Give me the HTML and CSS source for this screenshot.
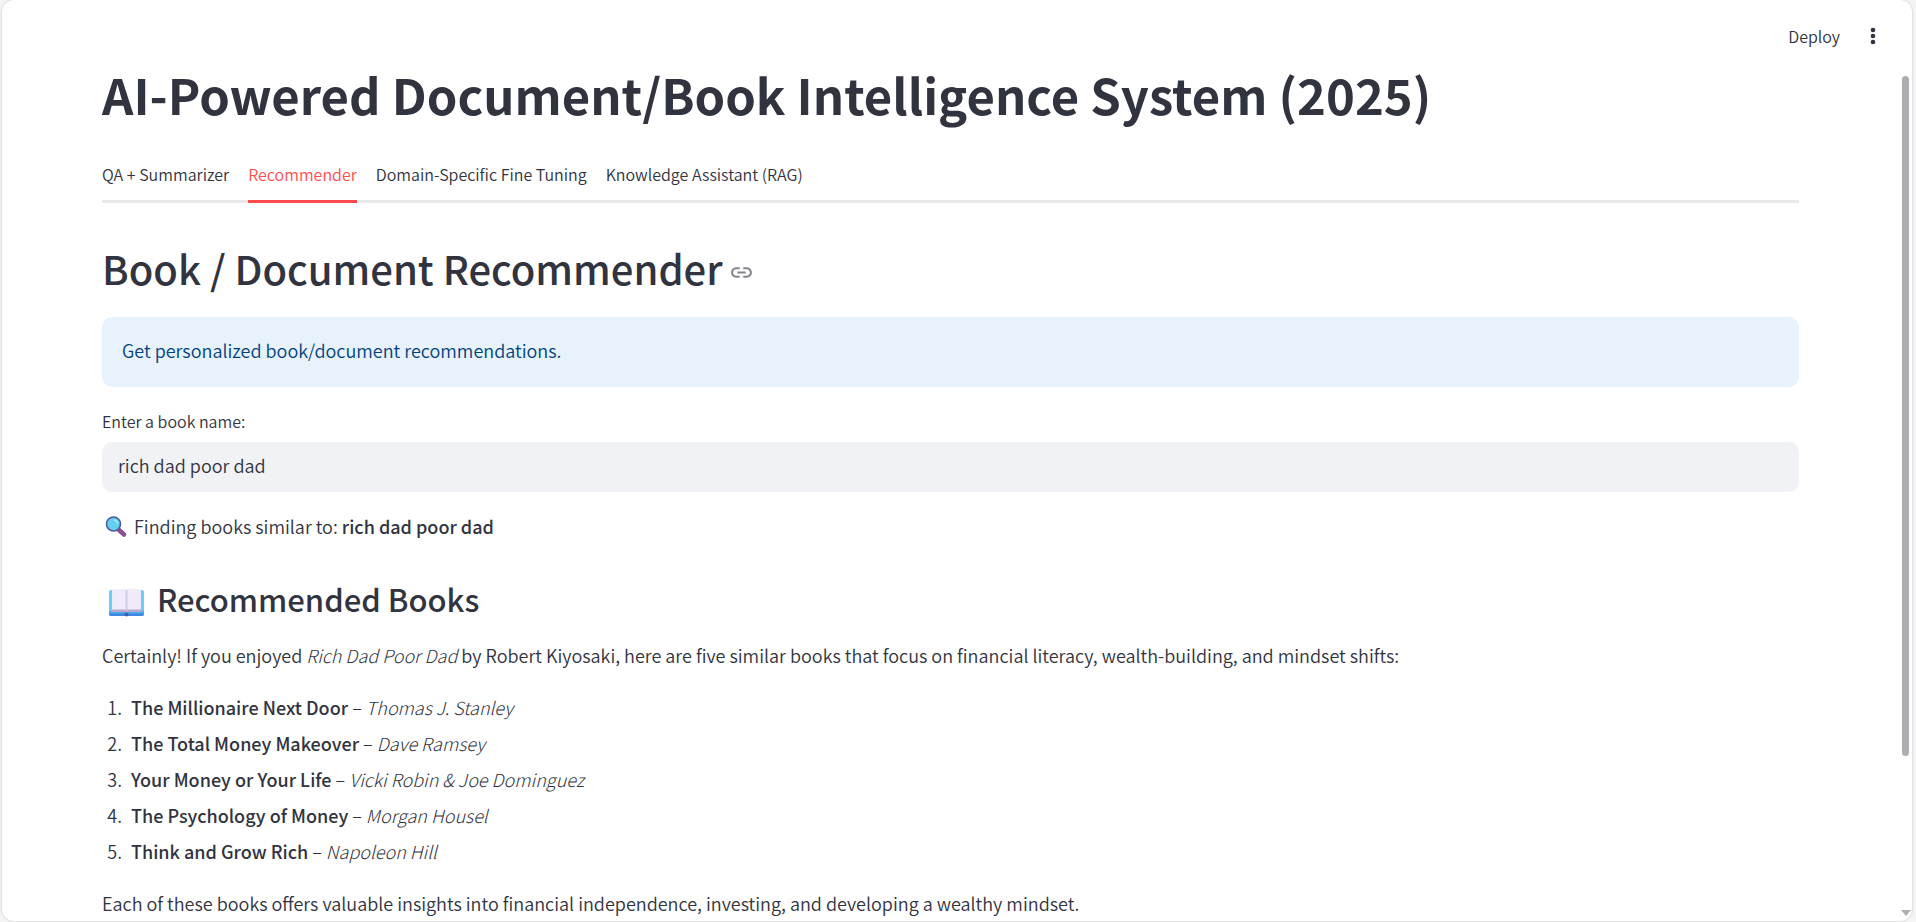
FILE: index.html
```html
<!DOCTYPE html>
<html lang="en">
<head>
<meta charset="utf-8">
<title>AI-Powered Document/Book Intelligence System (2025)</title>
<link rel="stylesheet" href="styles.css">
</head>
<body>
<div class="app">
  <header class="toolbar">
    <button class="deploy" type="button">Deploy</button>
    <button class="menu" type="button" aria-label="Main menu">
      <svg width="6" height="18" viewBox="0 0 6 18"><circle cx="3" cy="3" r="2.3"/><circle cx="3" cy="9" r="2.3"/><circle cx="3" cy="15" r="2.3"/></svg>
    </button>
  </header>
  <main class="content">
    <h1 class="title">AI-Powered Document/Book Intelligence System (2025)</h1>
    <div class="tabs" role="tablist">
      <button class="tab" type="button" role="tab" aria-selected="false">QA + Summarizer</button>
      <button class="tab tab-active" type="button" role="tab" aria-selected="true">Recommender</button>
      <button class="tab" type="button" role="tab" aria-selected="false">Domain-Specific Fine Tuning</button>
      <button class="tab" type="button" role="tab" aria-selected="false">Knowledge Assistant (RAG)</button>
    </div>
    <h2 class="heading" id="recommender">Book / Document Recommender
      <a class="anchor" href="#recommender" aria-label="Link to heading"><svg width="25" height="25" viewBox="0 0 24 24"><path d="M3.900 12c0-1.710 1.390-3.100 3.100-3.100h3.300V7H7c-2.760 0-5 2.240-5 5s2.240 5 5 5h3.300v-1.900H7c-1.710 0-3.100-1.390-3.100-3.100zM8 13h8v-2H8v2zm9-6h-3.300v1.900H17c1.710 0 3.100 1.390 3.100 3.100s-1.390 3.100-3.100 3.100h-3.300V17H17c2.760 0 5-2.240 5-5s-2.240-5-5-5z"/></svg></a>
    </h2>
    <div class="alert">Get personalized book/document recommendations.</div>
    <label class="label" for="book">Enter a book name:</label>
    <input class="input" id="book" type="text" value="rich dad poor dad">
    <p class="status">
      <svg class="glass" width="26" height="24" viewBox="0 0 26 24"><path d="M17 16l5 4.500" stroke="#8b4f92" stroke-width="4.500" stroke-linecap="round"/><circle cx="11.500" cy="10" r="7" fill="#63d0ee" stroke="#4c5a9b" stroke-width="1.600"/><path d="M12.500 6q2.500.5 3 3" fill="none" stroke="#a9ebfa" stroke-width="1.500" stroke-linecap="round"/></svg>
      <span>Finding books similar to: <strong>rich dad poor dad</strong></span>
    </p>
    <h3 class="subheading">
      <svg class="book" width="35" height="38" viewBox="0 0 35 38"><path d="M0 12q0-2 2-2h31q2 0 2 2v22q0 2-2 2H2q-2 0-2-2z" fill="#6ccdf5"/><path d="M0 32h35v2q0 2-2 2H2q-2 0-2-2z" fill="#3f86dd"/><path d="M0 31h35v2.500H0z" fill="#4daaf0"/><path d="M3 11q0-2 2-2h10.500q2 0 2 1 0-1 2-1H30q2 0 2 2v20H19.500q-2 0-2 1 0-1-2-1H3z" fill="#f0ebfa"/><path d="M2.500 29.500h13q1.500 0 2 1 .5-1 2-1h13V32h-13q-2 0-2 1 0-1-2-1h-13z" fill="#b8a9cb"/><path d="M17.500 10v20.500" stroke="#d3c8e4" stroke-width="2"/><circle cx="17.500" cy="34.500" r="2" fill="#3a62b0"/></svg>
      <span>Recommended Books</span>
    </h3>
    <p class="text">Certainly! If you enjoyed <em>Rich Dad Poor Dad</em> by Robert Kiyosaki, here are five similar books that focus on financial literacy, wealth-building, and mindset shifts:</p>
    <ol class="books">
      <li><strong>The Millionaire Next Door</strong> – <em>Thomas J. Stanley</em></li>
      <li><strong>The Total Money Makeover</strong> – <em>Dave Ramsey</em></li>
      <li><strong>Your Money or Your Life</strong> – <em>Vicki Robin &amp; Joe Dominguez</em></li>
      <li><strong>The Psychology of Money</strong> – <em>Morgan Housel</em></li>
      <li><strong>Think and Grow Rich</strong> – <em>Napoleon Hill</em></li>
    </ol>
    <p class="text">Each of these books offers valuable insights into financial independence, investing, and developing a wealthy mindset.</p>
  </main>
  <div class="scrollbar" aria-hidden="true">
    <div class="thumb"></div>
    <div class="arrow"></div>
  </div>
</div>
</body>
</html>
```
FILE: styles.css
```css
@counter-style spaced-decimal {
  system: extends decimal;
  suffix: ".\2002";
}
* { box-sizing: border-box; }
body {
  margin: 0;
  padding: 0 4px 1px 2px;
  height: 100vh;
  overflow: hidden;
  background: #f5f5f5;
  color: #31333f;
  font: 350 18px/30px "Noto Sans CJK SC", "Noto Sans", sans-serif;
}
h1, h2, h3, p, ol { margin: 0; padding: 0; }
button { padding: 0; border: 0; background: none; color: inherit; font: inherit; cursor: pointer; }
strong { font-weight: 500; }
em { font-weight: 300; }
.app {
  position: relative;
  height: 100%;
  overflow: hidden;
  background: #fff;
  border-radius: 12px;
  box-shadow: 0 0 3px rgba(0, 0, 0, 0.2);
}
.toolbar {
  position: absolute;
  top: 20px;
  right: 36px;
  display: flex;
  align-items: center;
  gap: 30px;
}
.deploy { font-size: 16px; line-height: 32px; }
.menu { display: flex; }
.menu svg { fill: #31333f; }
.content { display: flex; flex-direction: column; padding: 61px 113px 0 100px; }
.title { font-size: 49px; line-height: 66px; font-weight: 700; }
.tabs {
  display: flex;
  gap: 19px;
  margin-top: 23px;
  box-shadow: inset 0 -3px #e9e9ea;
}
.tab {
  padding-bottom: 2px;
  border-bottom: 3px solid transparent;
  font-size: 16px;
  line-height: 48px;
}
.tab-active { color: #ff4b4b; border-color: #ff4b4b; }
.heading {
  display: flex;
  align-items: center;
  gap: 6px;
  margin-top: 38px;
  font-size: 40px;
  line-height: 54px;
  font-weight: 500;
}
.anchor { display: flex; padding-top: 8px; }
.anchor svg { fill: #84858c; }
.alert {
  margin-top: 22px;
  padding: 18px 20px 22px;
  border-radius: 10px;
  background: #e7f2fc;
  color: #004280;
}
.label { margin-top: 22px; font-size: 16px; line-height: 24px; }
.input {
  width: 100%;
  height: 50px;
  margin-top: 9px;
  padding: 0 16px 4px;
  border: 0;
  border-radius: 10px;
  outline: 0;
  background: #f0f2f6;
  color: inherit;
  font: inherit;
}
.status { display: flex; align-items: center; gap: 6px; margin-top: 19px; }
.subheading {
  display: flex;
  align-items: center;
  gap: 13px;
  margin-top: 37px;
  padding-left: 7px;
  font-size: 31px;
  line-height: 42px;
  font-weight: 500;
}
.text { margin-top: 20px; }
.books {
  display: flex;
  flex-direction: column;
  gap: 6px;
  margin: 22px 0 2px;
  padding-left: 29px;
  list-style: spaced-decimal;
}
.scrollbar {
  position: absolute;
  top: 76px;
  right: 2px;
  bottom: 5px;
  width: 9px;
  display: flex;
  flex-direction: column;
  align-items: center;
  justify-content: space-between;
}
.thumb { width: 7px; height: 81%; border-radius: 4px; background: #adadb2; }
.arrow { border: 5px solid transparent; border-top: 6px solid #adadb2; border-bottom: 0; }
```
